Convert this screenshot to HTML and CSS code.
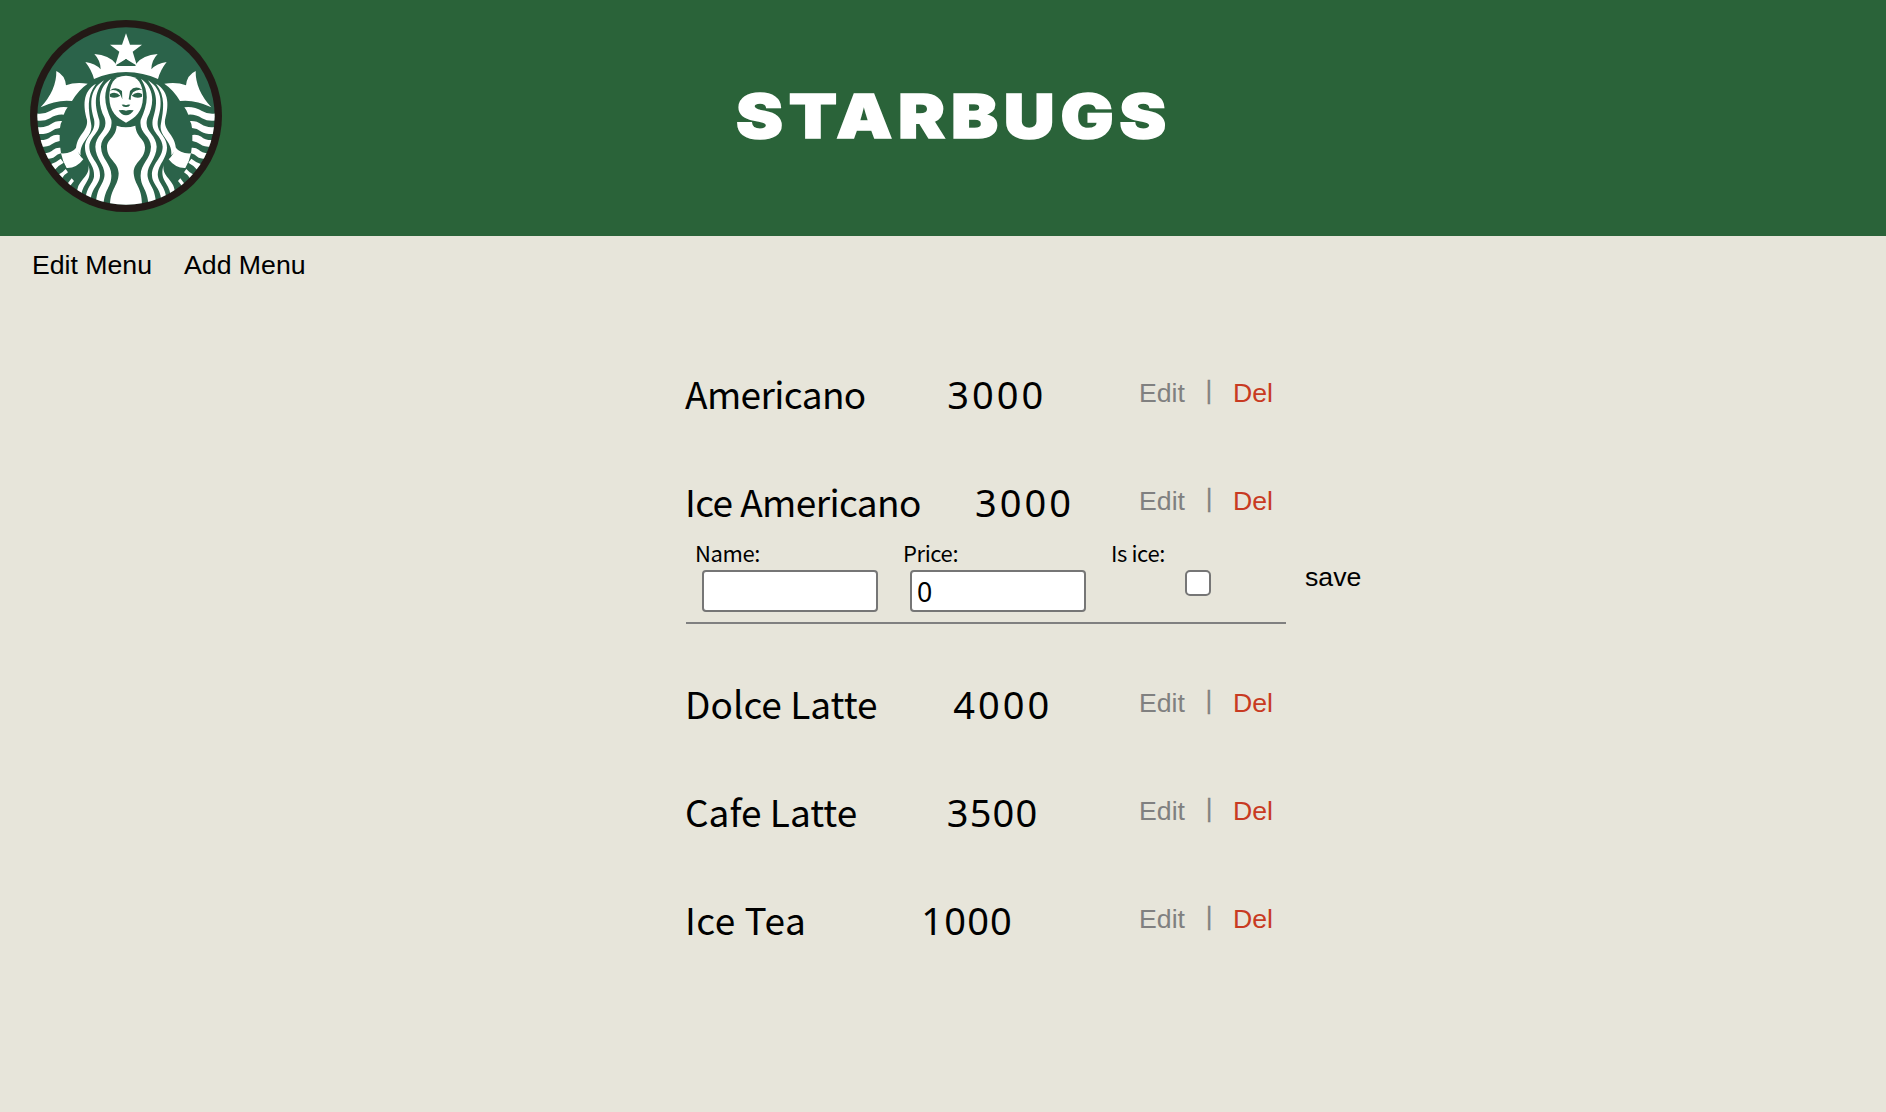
FILE: index.html
```
<!DOCTYPE html>
<html lang="en">
<head>
<meta charset="utf-8">
<title>Starbugs</title>
<link rel="stylesheet" href="styles.css">
</head>
<body>
<header class="header">
  <svg class="logo" viewBox="30 30 576 576" aria-hidden="true">
    <defs>
      <clipPath id="disc"><circle cx="318" cy="318" r="266"/></clipPath>
      <g id="side">
        <path d="M196 156Q226 160 242 178Q242 152 223 132Q268 136 286 160L290 168H319V186Q265 187 222 207Q215 180 196 156Z"/>
        <path d="M109 183Q135 195 138 226Q165 215 203 221Q175 240 156 273Q110 268 62 292Q110 240 109 183Z"/>
        <path d="M46 310Q70 315 90 303Q115 288 143 292Q136 300 131 314Q110 312 90 325Q70 336 46 331Z"/>
        <path d="M46 350Q75 355 92 343Q105 332 126 333Q120 343 120 354Q105 355 92 365Q78 374 50 372Z"/>
        <path d="M55 390Q80 392 92 380Q103 373 119 375V393Q105 395 95 403Q85 411 60 411Z"/>
        <path d="M70 430Q92 428 100 419Q108 412 121 413L123 430Q112 432 104 440Q97 446 78 446Z"/>
        <path d="M92 463Q110 456 122 446L131 458Q118 464 104 480Z"/>
        <path d="M115 494Q130 486 137 477L144 487Q134 492 124 508Z"/>
        <path d="M142 522L155 505L162 513L150 528Z"/>
        <path d="M123 430Q155 432 170 412Q175 435 190 448Q170 475 140 474Q128 455 123 430Z"/>
        <path d="M205 465C212 500 172 510 172 545L185 552C188 520 220 510 205 465Z"/>
        <path d="M228 221C186 245 190 290 201 330C205 365 168 375 168 420L182 436C178 390 222 380 213 340C206 300 198 260 228 221Z"/>
        <path d="M252 211C204 240 211 290 222 328C230 370 195 375 195 413C196 450 226 465 222 500C217 525 200 528 196 570H212C216 530 238 525 240 497C242 460 208 445 208 410C210 375 244 370 238 330C226 290 218 255 252 211Z"/>
        <path d="M273 206C230 235 234 285 253 322C268 365 227 370 226 410C227 450 258 465 253 500C247 530 230 530 227 590H250C253 535 272 535 274 500C276 460 244 450 243 410C244 375 280 370 274 330C254 285 246 250 273 206Z"/>
      </g>
    </defs>
    <circle cx="318" cy="318" r="288" fill="#231916"/>
    <circle cx="318" cy="318" r="266" fill="#2b634a"/>
    <g clip-path="url(#disc)" fill="#fff">
      <use href="#side"/>
      <use href="#side" transform="matrix(-1 0 0 1 636 0)"/>
      <path d="M318 70L330 104H366L338 125L351 167L318 147L285 167L298 125L270 104H306Z"/>
      <path d="M290 347Q318 356 346 347C350 385 375 385 375 412C375 450 340 455 341 490C345 530 367 530 366 590H270C270 535 295 530 296 490C295 455 261 450 261 412C261 385 287 385 290 347Z"/>
      <path d="M318 197C355 197 369 222 369 262C368 305 345 325 318 338C291 325 268 305 268 262C268 222 281 197 318 197Z"/>
      <g fill="#2b634a">
        <path d="M291 165Q306 160 318 147Q330 160 345 165Q318 169 291 165Z"/>
        <path d="M269 242Q287 227 306 243L307 268Q302 254 297 247Q284 236 269 242Z"/>
        <path d="M367 240Q346 224 330 243L326 268L332 270Q332 255 339 247Q352 236 367 240Z"/>
        <path d="M270 252Q286 242 301 257Q285 267 270 260ZM335 257Q350 242 366 252V260Q350 267 335 257Z"/>
        <path d="M305 284Q312 282 318 286Q324 282 331 284Q327 292 318 291Q309 292 305 284Z"/>
        <path d="M296 301Q310 298 318 302Q326 298 341 301Q332 316 318 316Q304 316 296 301Z"/>
      </g>
    </g>
  </svg>
  <h1 class="title">STARBUGS</h1>
</header>
<nav class="nav">
  <a class="nav-link">Edit Menu</a>
  <a class="nav-link">Add Menu</a>
</nav>
<main class="menu">
  <section class="item">
    <div class="row">
      <span class="name americano">Americano</span><span class="price">3000</span>
      <div class="actions"><button class="edit">Edit</button><span class="bar">|</span><button class="del">Del</button></div>
    </div>
  </section>
  <section class="item">
    <div class="row">
      <span class="name americano">Ice Americano</span><span class="price">3000</span>
      <div class="actions"><button class="edit">Edit</button><span class="bar">|</span><button class="del">Del</button></div>
    </div>
    <form class="form">
      <label class="field">Name:<input class="text" type="text"></label>
      <label class="field">Price:<input class="text" type="text" value="0"></label>
      <label class="field field-ice">Is ice:<input class="check" type="checkbox"></label>
      <button class="save" type="button">save</button>
    </form>
  </section>
  <section class="item">
    <div class="row">
      <span class="name">Dolce Latte</span><span class="price">4000</span>
      <div class="actions"><button class="edit">Edit</button><span class="bar">|</span><button class="del">Del</button></div>
    </div>
  </section>
  <section class="item">
    <div class="row">
      <span class="name">Cafe Latte</span><span class="price price-narrow">3500</span>
      <div class="actions"><button class="edit">Edit</button><span class="bar">|</span><button class="del">Del</button></div>
    </div>
  </section>
  <section class="item">
    <div class="row">
      <span class="name tea">Ice Tea</span><span class="price price-narrow">1000</span>
      <div class="actions"><button class="edit">Edit</button><span class="bar">|</span><button class="del">Del</button></div>
    </div>
  </section>
</main>
</body>
</html>
```
FILE: styles.css
```
* { box-sizing: border-box; }
body {
  margin: 0;
  min-height: 100vh;
  background: #e7e5da;
  color: #000;
  font-family: "Noto Sans", sans-serif;
}
button {
  padding: 0;
  border: 0;
  background: none;
  font: 26.67px/30px "Liberation Sans", Arial, sans-serif;
}
.header {
  display: grid;
  grid-template-columns: 192px 1fr 192px;
  align-items: center;
  height: 236px;
  padding: 0 8px 4px 30px;
  background: #2a6339;
}
.logo { width: 192px; height: 192px; }
.title {
  margin: 0;
  color: #fff;
  font: 900 61px/80px Inter, sans-serif;
  letter-spacing: 5px;
  text-align: center;
  transform: scaleX(1.155);
  -webkit-text-stroke: 1.5px #fff;
}
.nav {
  display: flex;
  gap: 32px;
  height: 58px;
  padding: 14px 32px;
  font: 26.67px/30px "Liberation Sans", Arial, sans-serif;
}
.menu { width: 600px; margin: 70px 0 0 686px; }
.item { margin-bottom: 48px; }
.row {
  display: flex;
  justify-content: space-between;
  height: 60px;
  font-size: 38px;
  line-height: 60px;
  white-space: nowrap;
}
.name {
  margin-left: -1px;
  font-family: "Noto Sans CJK KR", sans-serif;
  font-size: 37px;
  line-height: 58px;
}
.americano { letter-spacing: -0.6px; }
.tea { letter-spacing: 0.5px; }
.price { letter-spacing: 3px; }
.price-narrow { letter-spacing: 1.2px; }
.actions {
  display: flex;
  align-items: flex-start;
  width: 158px;
  padding: 14px 0 0 11px;
}
.edit { width: 46px; color: #808080; }
.bar {
  width: 48px;
  margin-top: -3px;
  color: #808080;
  font-size: 24px;
  line-height: 28px;
  text-align: center;
  -webkit-text-stroke: 0.5px #808080;
}
.del { color: #c83a22; }
.form {
  display: grid;
  grid-template-columns: 208px 208px 203px max-content;
  height: 92px;
  margin-bottom: 50px;
  border-bottom: 2px solid #808080;
}
.field {
  display: flex;
  flex-direction: column;
  padding: 5px 0 0 9px;
  font: 22px/30px "Noto Sans CJK KR", sans-serif;
  letter-spacing: -0.4px;
}
.text {
  width: 176px;
  height: 42px;
  margin: 3px 0 0 7px;
  padding: 0 5px;
  border: 2px solid #767676;
  border-radius: 4px;
  background: #fff;
  font: 26.67px "Noto Sans", sans-serif;
}
.check {
  appearance: none;
  width: 26px;
  height: 26px;
  margin: 3px 0 0 74px;
  border: 2px solid #767676;
  border-radius: 5px;
  background: #fff;
}
.save { height: 30px; margin-top: 30px; }
```
